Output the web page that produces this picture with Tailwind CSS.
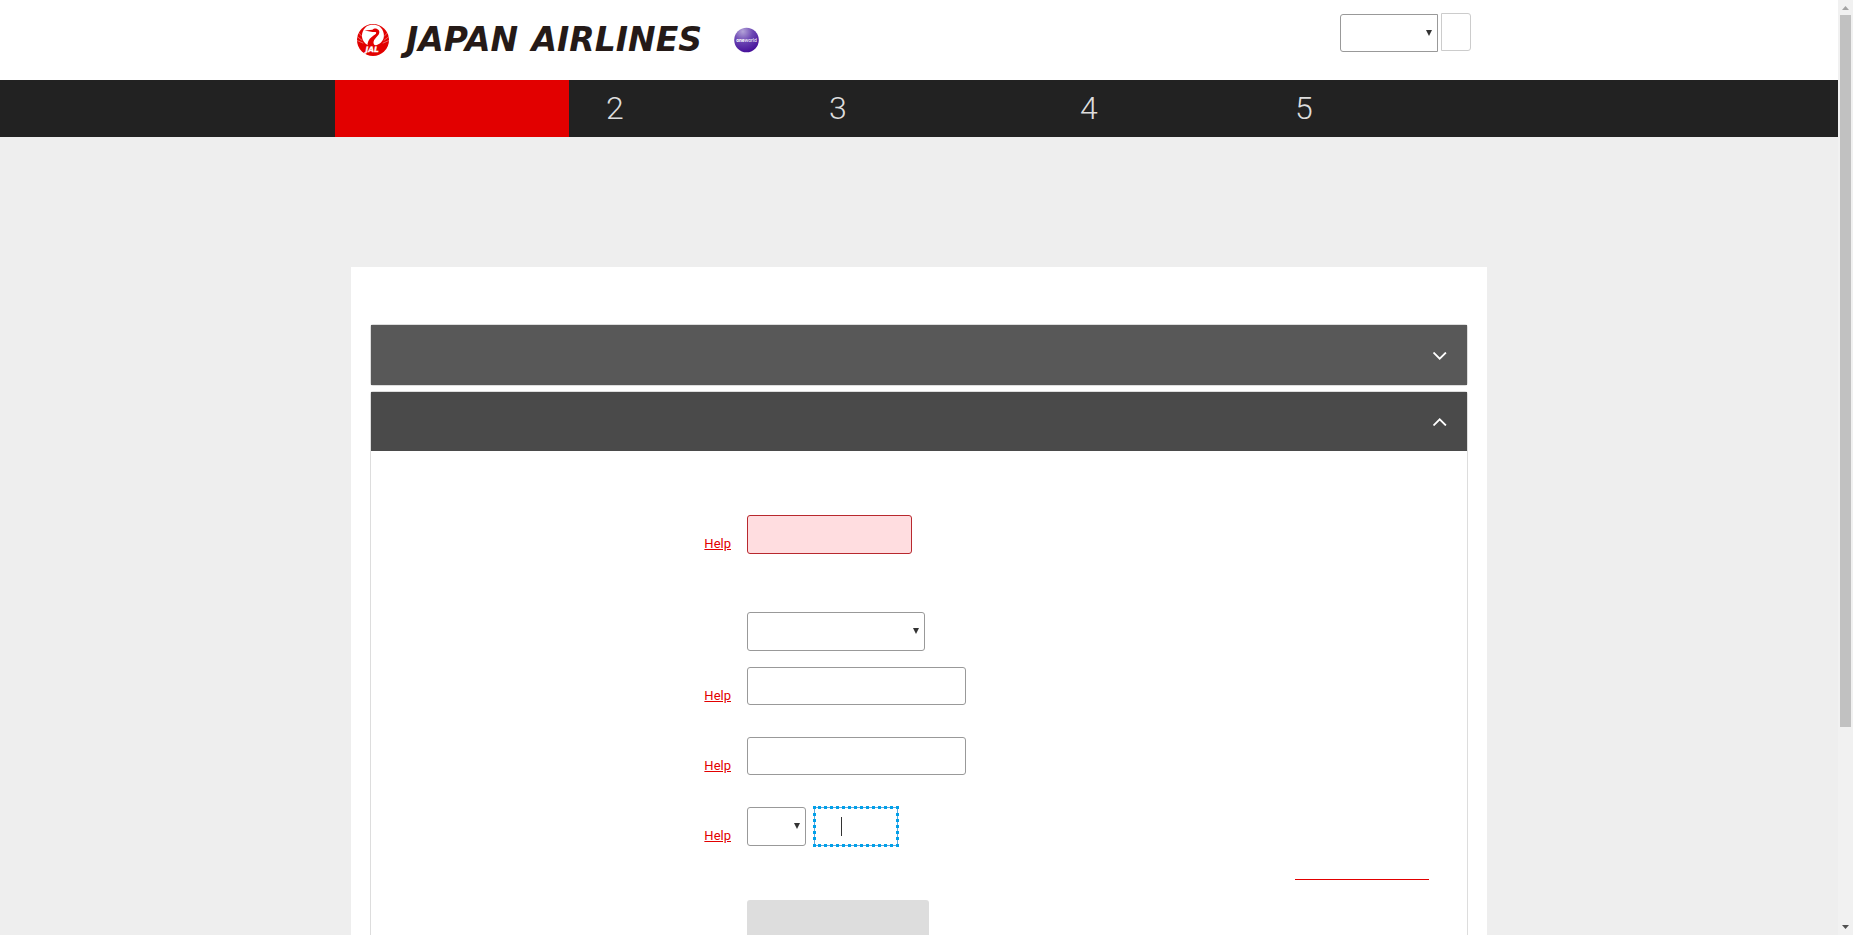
<!DOCTYPE html>
<html lang="en">
<head>
<meta charset="utf-8">
<title>Japan Airlines</title>
<script src="https://cdn.jsdelivr.net/npm/@tailwindcss/browser@4"></script>
</head>
<body class="flex h-screen overflow-hidden bg-[#eee] font-['Roboto',sans-serif] text-[13px] leading-4 text-[#333]">
<div class="min-w-0 flex-1 overflow-hidden">
  <header class="bg-white">
    <div class="mx-auto flex h-20 max-w-[1168px] items-start justify-between pr-8 pl-[21px]">
      <a href="#" aria-label="Japan Airlines" class="flex h-20 items-center gap-8">
        <span class="flex items-center gap-4">
          <svg class="size-[34px]" viewBox="0 0 34 34" aria-hidden="true">
            <circle cx="17" cy="17" r="16" fill="#e20000"/>
            <path d="M11.500 2.800C14.500 1.300 19.500 1.300 22.500 2.800C26.500 5.500 28.300 9.500 27.800 14C27.300 18 24 21 20 22.300H12C8.500 20.500 6.500 17.500 6 14C5.600 9.500 7.700 5.500 11.500 2.800Z" fill="#fff"/>
            <path d="M8.500 7.500L16.500 6.800C17.500 5.600 19.500 5.200 21 5.900C23.700 7 24 9.700 22.300 12C20.300 14.700 18 16 17.500 19C17.400 20.800 18 22 20 23H11.500C11.300 19 12.700 16.300 15.700 13.900C18.500 11.700 20.300 11 20.200 9.700C20 8.800 18.300 9 16.500 9Z" fill="#e20000"/>
            <path d="M1 13.500L6.300 17.500M1.100 17.500L7.300 20.200M33 13.500L27.700 17.500M32.900 17.500L26.700 20.200M2.500 9.800L6 13.500M31.500 9.800L28 13.500" stroke="#fff" stroke-width=".4"/>
            <text x="9.500" y="29" fill="#fff" stroke="#fff" stroke-width=".3" font-family="DejaVu Sans" font-size="7.500" font-weight="700" font-style="italic">JAL</text>
          </svg>
          <span class="flex w-[296px] justify-between font-['DejaVu_Sans',sans-serif] text-[33px] leading-8 font-bold text-[#251a17] italic"><span>JAPAN</span><span>AIRLINES</span></span>
        </span>
        <svg class="size-[26px]" viewBox="0 0 26 26" aria-hidden="true">
          <defs><radialGradient id="ball" cx=".35" cy=".15" r=".9"><stop offset="0" stop-color="#b3a3d8"/><stop offset=".45" stop-color="#6d48b4"/><stop offset="1" stop-color="#430c98"/></radialGradient></defs>
          <circle cx="12.500" cy="13" r="12.300" fill="url(#ball)"/>
          <text x="12.500" y="14.500" text-anchor="middle" fill="#fff" font-family="Roboto" font-size="5"><tspan font-weight="700">one</tspan>world</text>
        </svg>
      </a>
      <form class="flex gap-[3px] pt-[13px]">
        <div class="relative mt-px">
          <select aria-label="Language" class="block h-[38px] w-[98px] appearance-none rounded-l-[3px] border border-[#999] bg-white"></select>
          <svg class="pointer-events-none absolute top-4 right-1.5 size-1.5" viewBox="0 0 6 6" aria-hidden="true"><path d="M0 0H6L3 6Z" fill="#333"/></svg>
        </div>
        <button type="button" aria-label="Go" class="h-[38px] w-[30px] rounded-r-[3px] border border-[#ccc] bg-white"></button>
      </form>
    </div>
  </header>
  <nav aria-label="Steps" class="bg-[#222]">
    <ol class="mx-auto flex h-[57px] max-w-[1168px] items-start text-[32px] leading-[56px] font-light text-[#ddd]">
      <li class="h-full w-[234px] bg-[#e20000]"></li>
      <li class="w-[223px] pl-[37px]">2</li>
      <li class="w-[251px] pl-[37px]">3</li>
      <li class="w-[215px] pl-[37px]">4</li>
      <li class="pl-[37px]">5</li>
    </ol>
  </nav>
  <main class="mx-auto mt-[130px] min-h-screen max-w-[1136px] bg-white px-[19px] pt-[57px]">
    <section class="rounded-[3px] border border-[#ddd]">
      <button type="button" aria-label="Expand section" class="flex h-[60px] w-full items-center justify-end bg-[#585858] pt-0.5 pr-5">
        <svg class="h-2 w-3.5" viewBox="0 0 14 8" aria-hidden="true"><path d="M.5 .5L6.700 6.700L12.900 .5" fill="none" stroke="#fff" stroke-width="1.800"/></svg>
      </button>
    </section>
    <section class="mt-[5px] min-h-screen rounded-[3px] border border-[#ddd]">
      <button type="button" aria-label="Collapse section" class="flex h-[59px] w-full items-center justify-end bg-[#4a4a4a] pr-5">
        <svg class="h-2 w-3.5" viewBox="0 0 14 8" aria-hidden="true"><path d="M.5 7.500L6.700 1.300L12.900 7.500" fill="none" stroke="#fff" stroke-width="1.800"/></svg>
      </button>
      <form class="pt-16">
        <div class="flex items-end gap-4">
          <div class="w-[360px] pb-0.5 text-right"><a href="#" class="text-[#e20000] underline">Help</a></div>
          <input type="text" aria-label="Membership number" aria-invalid="true" class="h-[39px] w-[165px] rounded-[3px] border border-[#b8282e] bg-[#ffdde0] px-2">
        </div>
        <div class="mt-[58px] flex items-end gap-4">
          <div class="w-[360px]"></div>
          <div class="relative">
            <select aria-label="Title" class="block h-[39px] w-[178px] appearance-none rounded-[3px] border border-[#999] bg-white"></select>
            <svg class="pointer-events-none absolute top-4 right-1.5 size-1.5" viewBox="0 0 6 6" aria-hidden="true"><path d="M0 0H6L3 6Z" fill="#333"/></svg>
          </div>
        </div>
        <div class="mt-4 flex items-end gap-4">
          <div class="w-[360px] pb-px text-right"><a href="#" class="text-[#e20000] underline">Help</a></div>
          <input type="text" aria-label="Last name" class="h-[38px] w-[219px] rounded-[3px] border border-[#999] bg-white px-2">
        </div>
        <div class="mt-8 flex items-end gap-4">
          <div class="w-[360px] pb-px text-right"><a href="#" class="text-[#e20000] underline">Help</a></div>
          <input type="text" aria-label="First name" class="h-[38px] w-[219px] rounded-[3px] border border-[#999] bg-white px-2">
        </div>
        <div class="mt-8 flex items-end gap-4">
          <div class="w-[360px] pb-0.5 text-right"><a href="#" class="text-[#e20000] underline">Help</a></div>
          <div class="flex gap-2">
            <div class="relative">
              <select aria-label="Month" class="block h-[39px] w-[59px] appearance-none rounded-[3px] border border-[#999] bg-white"></select>
              <svg class="pointer-events-none absolute top-4 right-1.5 size-1.5" viewBox="0 0 6 6" aria-hidden="true"><path d="M0 0H6L3 6Z" fill="#333"/></svg>
            </div>
            <div class="relative">
              <input type="text" aria-label="Day" class="block h-[39px] w-[84px] border border-[#5fa8dc] bg-white px-2 outline-none">
              <!-- focus ring -->
              <svg class="pointer-events-none absolute -inset-px h-[41px] w-[86px]" viewBox="0 0 86 41" aria-hidden="true" fill="none" stroke="#00a0e9" stroke-width="3">
                <path d="M0 1.500H3M83 1.500H86M0 39.500H3M83 39.500H86"/>
                <path d="M5 1.500H83M5 39.500H83" stroke-dasharray="3 3"/>
                <path d="M1.500 7V37M84.500 7V37" stroke-dasharray="3 3"/>
                <path d="M28.500 11V30" stroke="#333" stroke-width="1"/>
              </svg>
            </div>
          </div>
        </div>
        <div class="flex justify-end pr-[38px]">
          <a href="#" aria-label="Contact details" class="block h-[34px] w-[134px] border-b border-[#e20000]"></a>
        </div>
        <div class="mt-5 flex gap-4">
          <div class="w-[360px]"></div>
          <button type="button" aria-label="Apply" class="h-[48px] w-[182px] rounded-[3px] bg-[#ddd]"></button>
        </div>
      </form>
    </section>
  </main>
</div>
<!-- page scrollbar -->
<div class="flex w-[15px] shrink-0 flex-col items-center bg-[#f1f1f1]" aria-hidden="true">
  <svg class="size-[15px] shrink-0" viewBox="0 0 15 15"><path d="M4 10L7.500 6L11 10Z" fill="#a3a3a3"/></svg>
  <div class="min-h-0 w-full flex-1 px-0.5"><div class="bg-[#c1c1c1]" style="height:78.7%"></div></div>
  <svg class="size-[15px] shrink-0" viewBox="0 0 15 15"><path d="M4 5L7.500 9L11 5Z" fill="#505050"/></svg>
</div>
</body>
</html>
